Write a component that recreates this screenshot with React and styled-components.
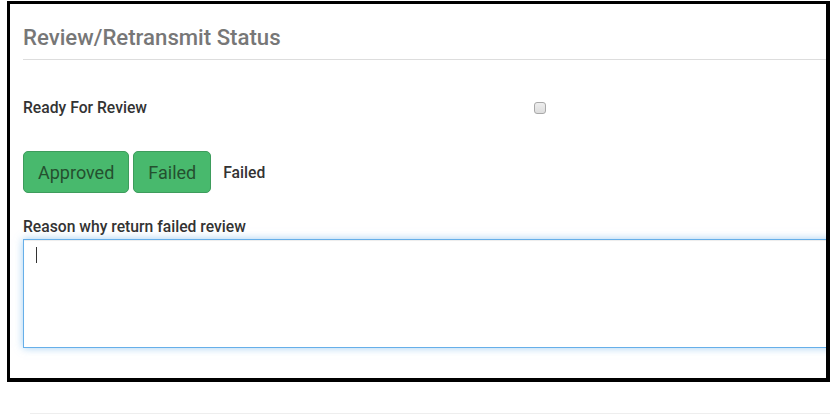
import React from "react";
import styled, { createGlobalStyle } from "styled-components";

const Global = createGlobalStyle`
  html, body { margin: 0; padding: 0; background: #fff; }
  body { font-family: Roboto, "Helvetica Neue", Arial, sans-serif; color: #333; }
  * { box-sizing: border-box; }
`;

const Page = styled.div`
  width: 830px;
  height: 415px;
  overflow: hidden;
  padding: 1px 0 0 7px;
`;

const Frame = styled.div`
  width: 823px;
  height: 381px;
  border: 3px solid #000;
  border-right-width: 4px;
  border-bottom-width: 4px;
  overflow: hidden;
  padding: 0 0 0 13px;
`;

const Heading = styled.h3`
  margin: 0;
  padding: 21px 0 10px;
  font-size: 22.2px;
  font-weight: 500;
  color: #777;
  line-height: 24px;
  border-bottom: 1px solid #ddd;
`;

const Row = styled.div`
  display: flex;
  align-items: center;
  margin-top: ${(p) => p.$top || 0}px;
`;

const Label = styled.label`
  font-size: 15.7px;
  font-weight: 500;
  color: #333;
  width: ${(p) => (p.$w ? p.$w + "px" : "auto")};
`;

const Check = styled.span`
  width: 12px;
  height: 12px;
  border: 1px solid #a9a9a9;
  border-radius: 3px;
  background: linear-gradient(#eee, #ddd);
`;

const Button = styled.button`
  height: 42px;
  padding: 0 ${(p) => p.$px}px;
  background: #48b96d;
  border: 1px solid #3d9c5c;
  border-radius: 5px;
  color: #24502f;
  font-family: Roboto, Arial, sans-serif;
  font-size: 18px;
  margin-right: 4px;
`;

const Status = styled.span`
  margin-left: 8px;
  font-size: 15.7px;
  font-weight: 500;
  color: #333;
`;

const FieldLabel = styled.div`
  margin-top: 25px;
  font-size: 15.7px;
  font-weight: 500;
  color: #333;
  line-height: 18px;
`;

const Area = styled.div`
  margin-top: 3px;
  width: 820px;
  height: 109px;
  border: 1px solid #66afe9;
  box-shadow: inset 0 1px 1px rgba(0,0,0,.075), 0 0 8px rgba(102,175,233,.6);
  padding: 7px 12px;
`;

const Caret = styled.span`
  display: block;
  width: 1px;
  height: 16px;
  background: #333;
`;

const Footer = styled.div`
  margin: 31px 0 0 23px;
  border-top: 1px solid #eee;
`;

export default function App() {
  return (
    <Page>
      <Global />
      <Frame>
        <Heading>Review/Retransmit Status</Heading>
        <Row $top={38}>
          <Label $w={511}>Ready For Review</Label>
          <Check />
        </Row>
        <Row $top={34}>
          <Button $px={14}>Approved</Button>
          <Button $px={14}>Failed</Button>
          <Status>Failed</Status>
        </Row>
        <FieldLabel>Reason why return failed review</FieldLabel>
        <Area>
          <Caret />
        </Area>
      </Frame>
      <Footer />
    </Page>
  );
}
